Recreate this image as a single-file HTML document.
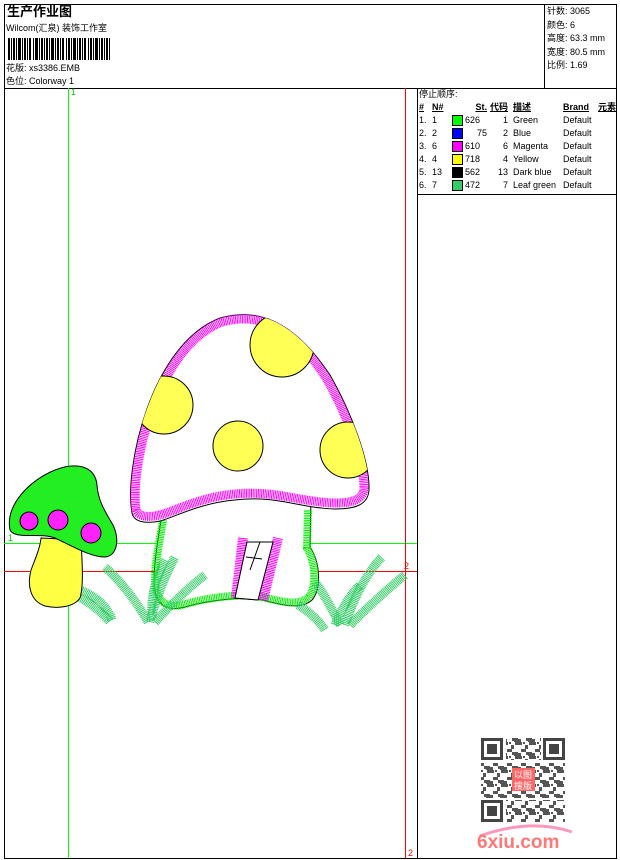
<!DOCTYPE html>
<html><head><meta charset="utf-8"><style>
html,body{margin:0;padding:0;background:#fff;}
body{width:620px;height:860px;position:relative;overflow:hidden;font-family:"Liberation Sans","WenQuanYi Zen Hei","Noto Sans CJK SC",sans-serif;color:#000;}
.a{position:absolute;}
.t{font-size:9px;line-height:11px;white-space:nowrap;}
table{border-collapse:collapse;font-size:9px;}
td{padding:0;height:13px;line-height:13px;white-space:nowrap;}
</style></head><body>
<svg class="a" style="left:0;top:0" width="620" height="860">
<rect x="4.5" y="4.5" width="612" height="854" fill="none" stroke="#000"/>
<line x1="4" y1="88.5" x2="617" y2="88.5" stroke="#000"/>
<line x1="544.5" y1="4" x2="544.5" y2="88" stroke="#000"/>
<line x1="417.5" y1="88" x2="417.5" y2="858" stroke="#000"/>
<line x1="417" y1="194.5" x2="617" y2="194.5" stroke="#000"/>
<!-- barcode -->
<g fill="#000">
<rect x="8" y="38" width="2" height="22"/><rect x="11" y="38" width="1" height="22"/><rect x="13" y="38" width="2" height="22"/><rect x="16" y="38" width="1" height="22"/><rect x="18" y="38" width="3" height="22"/><rect x="22" y="38" width="1" height="22"/><rect x="24" y="38" width="2" height="22"/><rect x="27" y="38" width="1" height="22"/><rect x="29" y="38" width="2" height="22"/><rect x="33" y="38" width="1" height="22"/><rect x="35" y="38" width="3" height="22"/><rect x="39" y="38" width="1" height="22"/><rect x="41" y="38" width="2" height="22"/><rect x="44" y="38" width="1" height="22"/><rect x="46" y="38" width="2" height="22"/><rect x="49" y="38" width="1" height="22"/><rect x="51" y="38" width="3" height="22"/><rect x="55" y="38" width="1" height="22"/><rect x="57" y="38" width="2" height="22"/><rect x="60" y="38" width="1" height="22"/><rect x="62" y="38" width="2" height="22"/><rect x="66" y="38" width="1" height="22"/><rect x="68" y="38" width="2" height="22"/><rect x="71" y="38" width="1" height="22"/><rect x="73" y="38" width="3" height="22"/><rect x="77" y="38" width="1" height="22"/><rect x="79" y="38" width="2" height="22"/><rect x="82" y="38" width="1" height="22"/><rect x="84" y="38" width="2" height="22"/><rect x="88" y="38" width="1" height="22"/><rect x="90" y="38" width="2" height="22"/><rect x="93" y="38" width="1" height="22"/><rect x="95" y="38" width="3" height="22"/><rect x="99" y="38" width="1" height="22"/><rect x="101" y="38" width="2" height="22"/><rect x="104" y="38" width="1" height="22"/><rect x="106" y="38" width="2" height="22"/><rect x="109" y="38" width="1" height="22"/>
</g>
<!-- guide lines -->
<line x1="68.5" y1="88" x2="68.5" y2="858" stroke="#0f0"/>
<line x1="4" y1="543.5" x2="417" y2="543.5" stroke="#0f0"/>
<line x1="4" y1="571.5" x2="417" y2="571.5" stroke="#f00"/>
<line x1="405.5" y1="88" x2="405.5" y2="858" stroke="#f00"/>
<text x="71" y="95" font-size="9" fill="#0c0" font-family="Liberation Sans">1</text>
<text x="8" y="541" font-size="9" fill="#0c0" font-family="Liberation Sans">1</text>
<text x="404" y="569" font-size="9" fill="#f00" font-family="Liberation Sans">2</text>
<text x="408" y="856" font-size="9" fill="#f00" font-family="Liberation Sans">2</text>
<!-- big stem -->
<path d="M165,495 C160,530 150,575 156,595 C160,607 170,611 185,607 C205,601 240,596 262,600 C280,604 300,611 312,600 C322,588 320,562 310,547 L311,495 Z" fill="#fff" stroke="#000"/>
<path d="M163,520 C158,552 152,575 157,594 C162,605 172,608 186,604 C206,598 240,593 262,597 C280,601 298,607 309,597 C317,585 316,563 307,548 L308,510" fill="none" stroke="#00ee00" stroke-width="8" stroke-dasharray="1 0.7"/>
<!-- door -->
<path d="M247,542 L273,542 L258,600 L235,598 Z" fill="#fff" stroke="#000"/>
<path d="M243,538 L236,598 M278,538 L263,600" stroke="#ff00ff" stroke-width="10" stroke-dasharray="1 0.7"/>
<path d="M247,542 L273,542 L258,600 L235,598 Z" fill="#fff" stroke="#000"/>
<path d="M260,542 L250,570 M246,557 L262,559" stroke="#000"/>
<!-- grass -->
<g fill="none" stroke="#33cc66" stroke-width="9" stroke-dasharray="1 0.7">
<path d="M52,585 Q90,598 110,622"/>
<path d="M80,590 Q105,600 112,620"/>
<path d="M148,622 Q130,590 105,567"/>
<path d="M150,622 Q160,585 175,557"/>
<path d="M155,622 Q185,590 205,575"/>
<path d="M165,560 Q150,590 152,615"/>
<path d="M298,605 Q315,615 325,630"/>
<path d="M340,625 Q325,595 315,582"/>
<path d="M345,625 Q360,580 382,557"/>
<path d="M350,625 Q380,595 405,575"/>
<path d="M335,625 Q345,600 360,585"/>
</g>
<!-- big cap -->
<path d="M132,513 C124,470 150,345 220,318 C265,305 300,330 330,375 C350,410 370,460 369,490 C368,505 355,509 335,509 C300,508 275,495 235,500 C200,503 175,517 160,521 C145,524 134,522 132,513 Z" fill="#fff" stroke="#000"/>
<defs><clipPath id="cc"><path d="M132,513 C124,470 150,345 220,318 C265,305 300,330 330,375 C350,410 370,460 369,490 C368,505 355,509 335,509 C300,508 275,495 235,500 C200,503 175,517 160,521 C145,524 134,522 132,513 Z"/></clipPath></defs>
<path d="M136,510 C130,470 155,348 222,322 C265,310 298,334 326,378 C346,412 364,460 364,488 C363,500 352,503 335,503 C300,502 275,490 235,494 C200,497 175,511 160,515 C147,518 138,516 136,510" fill="none" stroke="#ff00ff" stroke-width="9" stroke-dasharray="1 0.7"/>
<g clip-path="url(#cc)" fill="#ffff55" stroke="#000">
<circle cx="282" cy="345" r="32"/>
<circle cx="164" cy="405" r="29"/>
<circle cx="348" cy="450" r="28"/>
</g>
<circle cx="238" cy="446" r="25" fill="#ffff55" stroke="#000"/>
<!-- small mushroom stem -->
<path d="M41,538 L81,540 C82,560 84,585 80,598 C74,607 58,609 45,606 C30,601 27,585 31,570 C36,557 40,548 41,538 Z" fill="#ffff44" stroke="#000"/>
<!-- small cap -->
<path d="M10,530 C5,505 30,480 55,470 C75,462 95,465 97,485 C98,500 104,510 113,525 C120,540 117,556 105,557 C90,557 70,545 55,538 C40,532 15,540 10,530 Z" fill="#22ee22" stroke="#000"/>
<g fill="#ff22ff" stroke="#000">
<circle cx="29" cy="521" r="9"/><circle cx="58" cy="520" r="10"/><circle cx="91" cy="533" r="10"/>
</g>
<!-- QR -->
<g fill="#444">
<rect x="481" y="738" width="22" height="22"/><rect x="543" y="738" width="22" height="22"/><rect x="481" y="800" width="22" height="22"/>
</g>
<g fill="#fff"><rect x="484" y="741" width="16" height="16"/><rect x="546" y="741" width="16" height="16"/><rect x="484" y="803" width="16" height="16"/></g>
<g fill="#444"><rect x="487" y="744" width="10" height="10"/><rect x="549" y="744" width="10" height="10"/><rect x="487" y="806" width="10" height="10"/></g>
<defs><pattern id="qp" width="14" height="14" patternUnits="userSpaceOnUse"><rect x="0" y="0" width="4" height="3" fill="#555"/><rect x="7" y="3" width="3" height="4" fill="#555"/><rect x="3" y="7" width="5" height="3" fill="#555"/><rect x="10" y="10" width="4" height="4" fill="#555"/><rect x="11" y="0" width="3" height="3" fill="#555"/><rect x="0" y="11" width="3" height="3" fill="#555"/><rect x="5" y="0" width="2" height="2" fill="#555"/><rect x="8" y="10" width="2" height="3" fill="#555"/></pattern></defs>
<rect x="506" y="738" width="35" height="22" fill="url(#qp)"/>
<rect x="481" y="763" width="84" height="35" fill="url(#qp)"/>
<rect x="506" y="800" width="59" height="22" fill="url(#qp)"/>
<rect x="512" y="768" width="23" height="23" fill="#f66"/>
<text x="514" y="778" font-size="9" fill="#fff" font-family="WenQuanYi Zen Hei">以图</text>
<text x="514" y="789" font-size="9" fill="#fff" font-family="WenQuanYi Zen Hei">搜版</text>
<path d="M480,836 Q530,818 572,832" stroke="#f9b" stroke-width="3" fill="none"/>
<text x="477" y="848" font-size="19" font-weight="bold" fill="#f77" font-family="Liberation Sans">6xiu.com</text>
</svg>
<div class="a" style="left:7px;top:4px;font-size:13px;font-weight:bold;line-height:16px;">生产作业图</div>
<div class="a t" style="left:6px;top:23px;">Wilcom(汇泉) 装饰工作室</div>
<div class="a t" style="left:6px;top:63px;">花版: xs3386.EMB</div>
<div class="a t" style="left:6px;top:76px;">色位: Colorway 1</div>
<div class="a t" style="left:547px;top:5px;line-height:13.5px;">针数: 3065<br>颜色: 6<br>高度: 63.3 mm<br>宽度: 80.5 mm<br>比例: 1.69</div>
<div class="a t" style="left:419px;top:89px;">停止顺序:</div>
<table class="a" style="left:419px;top:101px;">
<tr style="font-weight:bold;text-decoration:underline;"><td style="width:13px">#</td><td style="width:20px">N#</td><td style="width:13px"></td><td style="width:22px;text-align:right">St.</td><td style="width:21px;text-align:right">代码</td><td style="width:50px;padding-left:5px">描述</td><td style="width:35px">Brand</td><td>元素</td></tr>
<tr><td>1.</td><td>1</td><td><span style="display:inline-block;width:9px;height:9px;background:#0f0;border:1px solid #000;vertical-align:middle"></span></td><td>626</td><td style="text-align:right">1</td><td style="padding-left:5px">Green</td><td>Default</td><td></td></tr>
<tr><td>2.</td><td>2</td><td><span style="display:inline-block;width:9px;height:9px;background:#00f;border:1px solid #000;vertical-align:middle"></span></td><td style="text-align:right">75</td><td style="text-align:right">2</td><td style="padding-left:5px">Blue</td><td>Default</td><td></td></tr>
<tr><td>3.</td><td>6</td><td><span style="display:inline-block;width:9px;height:9px;background:#f0f;border:1px solid #000;vertical-align:middle"></span></td><td>610</td><td style="text-align:right">6</td><td style="padding-left:5px">Magenta</td><td>Default</td><td></td></tr>
<tr><td>4.</td><td>4</td><td><span style="display:inline-block;width:9px;height:9px;background:#ff0;border:1px solid #000;vertical-align:middle"></span></td><td>718</td><td style="text-align:right">4</td><td style="padding-left:5px">Yellow</td><td>Default</td><td></td></tr>
<tr><td>5.</td><td>13</td><td><span style="display:inline-block;width:9px;height:9px;background:#000;border:1px solid #000;vertical-align:middle"></span></td><td>562</td><td style="text-align:right">13</td><td style="padding-left:5px">Dark blue</td><td>Default</td><td></td></tr>
<tr><td>6.</td><td>7</td><td><span style="display:inline-block;width:9px;height:9px;background:#3c6;border:1px solid #000;vertical-align:middle"></span></td><td>472</td><td style="text-align:right">7</td><td style="padding-left:5px">Leaf green</td><td>Default</td><td></td></tr>
</table>
</body></html>
